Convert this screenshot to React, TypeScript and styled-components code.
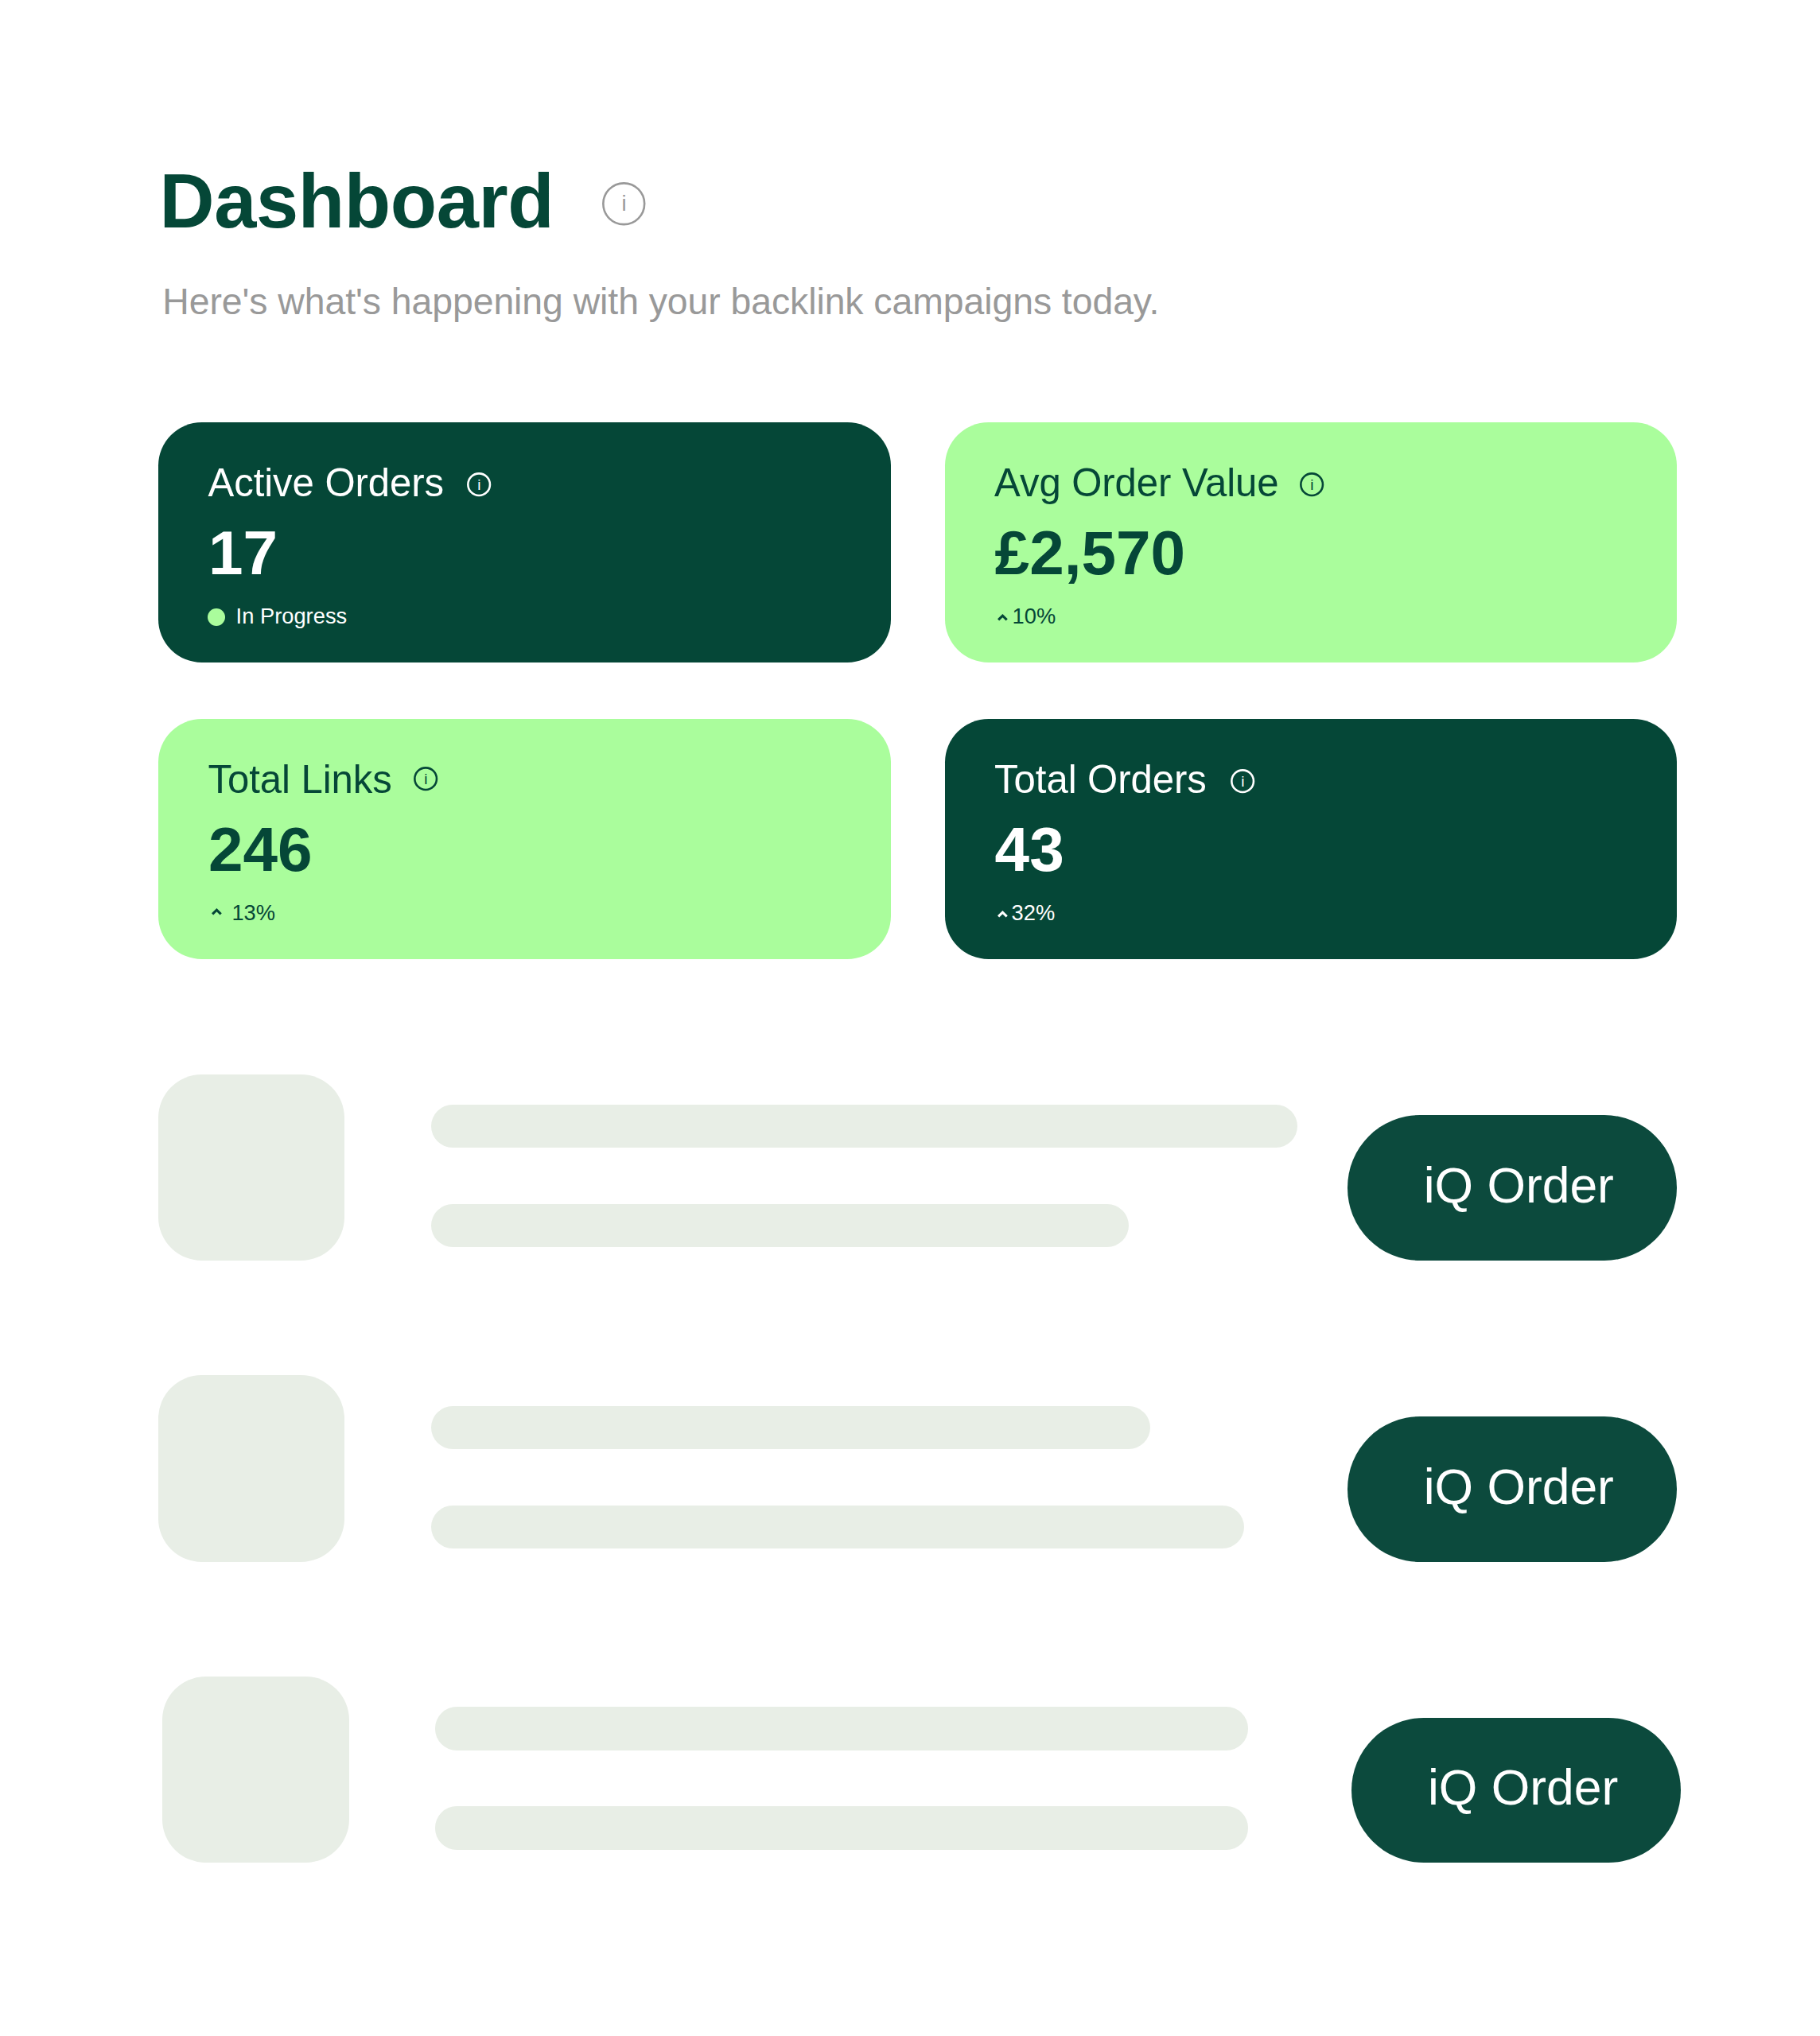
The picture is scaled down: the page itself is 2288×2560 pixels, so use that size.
import React from 'react';
import styled, { createGlobalStyle } from 'styled-components';

const DARK = '#054737';
const LIGHT = '#aafd9c';
const GREY = '#999999';
const PLACEHOLDER = '#e8eee6';
const BUTTON = '#0c4a3d';

const GlobalStyle = createGlobalStyle`
  *, *::before, *::after { box-sizing: border-box; }
  body {
    margin: 0;
    background: #ffffff;
    font-family: "Liberation Sans", Arial, Helvetica, sans-serif;
  }
`;

const Page = styled.main`
  width: 2288px;
  height: 2560px;
  overflow: hidden;
  padding: 197px 0 0 199px;
`;

const Header = styled.header`
  display: flex;
  flex-direction: column;
`;

const TitleRow = styled.div`
  display: flex;
  align-items: flex-start;
`;

const Title = styled.h1`
  margin: 0;
  padding-left: 1.5px;
  font-size: 95.6px;
  letter-spacing: -0.4px;
  line-height: 112px;
  font-weight: 700;
  color: ${DARK};
  white-space: nowrap;
  width: 558px;
`;

const Subtitle = styled.p`
  margin: 42px 0 0 5.3px;
  font-size: 46.4px;
  letter-spacing: -0.07px;
  line-height: 56px;
  color: ${GREY};
  white-space: nowrap;
`;

const InfoSvg = styled.svg<{ $size: number; $top: number; $left: number }>`
  display: block;
  flex: none;
  width: ${p => p.$size}px;
  height: ${p => p.$size}px;
  margin-top: ${p => p.$top}px;
  margin-left: ${p => p.$left}px;
  overflow: visible;
  font-family: inherit;
`;

const Grid = styled.section`
  display: grid;
  grid-template-columns: 920.6px 920.6px;
  grid-auto-rows: 302.3px;
  column-gap: 68px;
  row-gap: 70.7px;
  margin-top: 124px;
`;

const Card = styled.article<{ $dark: boolean }>`
  display: flex;
  flex-direction: column;
  padding: 47.7px 62.5px 0;
  border-radius: 54.6px;
  background: ${p => (p.$dark ? DARK : LIGHT)};
  color: ${p => (p.$dark ? '#ffffff' : DARK)};
`;

const LabelRow = styled.div`
  display: flex;
  align-items: flex-start;
  height: 56px;
`;

const Label = styled.span`
  font-size: 49.1px;
  letter-spacing: -0.06px;
  line-height: 56px;
  white-space: nowrap;
`;

const Value = styled.strong`
  margin: 20px 0 0 0.5px;
  font-size: 78.3px;
  line-height: 80px;
  font-weight: 700;
`;

const Foot = styled.div`
  display: flex;
  align-items: flex-start;
  height: 32px;
  margin-top: 24px;
  font-size: 27.3px;
  line-height: 32px;
`;

const Dot = styled.span`
  width: 22px;
  height: 22px;
  margin: 6.4px 13.5px 0 -0.4px;
  border-radius: 50%;
  background: ${LIGHT};
`;

const Caret = styled.svg<{ $left: number; $top: number; $gap: number }>`
  display: block;
  width: 13px;
  height: 9px;
  margin: ${p => p.$top}px ${p => p.$gap}px 0 ${p => p.$left}px;
`;

const List = styled.section`
  display: flex;
  flex-direction: column;
  gap: 144.4px;
  margin-top: 144.3px;
`;

const Row = styled.div<{ $indent: number }>`
  display: flex;
  width: 1909px;
  height: 234.3px;
  margin-left: ${p => p.$indent}px;
`;

const Thumb = styled.div`
  flex: none;
  width: 234.3px;
  height: 234.3px;
  border-radius: 54.6px;
  background: ${PLACEHOLDER};
`;

const Lines = styled.div`
  display: flex;
  flex-direction: column;
  flex: 1;
  gap: 70.8px;
  padding: 38.3px 0 0 108.7px;
`;

const Line = styled.div<{ $width: number }>`
  width: ${p => p.$width}px;
  height: 54.4px;
  border-radius: 27.3px;
  background: ${PLACEHOLDER};
`;

const OrderButton = styled.button`
  flex: none;
  align-self: flex-end;
  width: 414px;
  height: 182.4px;
  padding: 52.4px 0 0 95.7px;
  border: 0;
  border-radius: 91.2px;
  background: ${BUTTON};
  color: #ffffff;
  display: flex;
  align-items: flex-start;
  font-family: inherit;
  font-size: 62.4px;
  line-height: 72px;
  white-space: nowrap;
`;

interface InfoProps {
  size: number;
  fontSize: number;
  baseline: number;
  color?: string;
  top: number;
  left: number;
}

function Info({ size, fontSize, baseline, color = 'currentColor', top, left }: InfoProps) {
  const c = size / 2;
  return (
    <InfoSvg $size={size} $top={top} $left={left} viewBox={`0 0 ${size} ${size}`}>
      <circle cx={c} cy={c} r={c - 1.35} fill="none" stroke={color} strokeWidth="2.6" />
      <text x={c + 0.3} y={c + baseline} fontSize={fontSize} fill={color} textAnchor="middle">
        i
      </text>
    </InfoSvg>
  );
}

interface Stat {
  label: string;
  value: string;
  note: string;
  dark: boolean;
  infoTop: number;
  infoLeft: number;
  caret?: { left: number; top: number; gap: number };
}

const stats: Stat[] = [
  { label: 'Active Orders', value: '17', note: 'In Progress', dark: true, infoTop: 15.2, infoLeft: 29.3 },
  { label: 'Avg Order Value', value: '£2,570', note: '10%', dark: false, infoTop: 15.2, infoLeft: 26.8, caret: { left: 3.5, top: 12.9, gap: 6 } },
  { label: 'Total Links', value: '246', note: '13%', dark: false, infoTop: 12.3, infoLeft: 27, caret: { left: 4.6, top: 10.2, gap: 12.3 } },
  { label: 'Total Orders', value: '43', note: '32%', dark: true, infoTop: 15.3, infoLeft: 29.8, caret: { left: 3.5, top: 12.9, gap: 5 } },
];

const rows = [
  { lines: [1089.4, 877], indent: 0 },
  { lines: [904.3, 1021.6], indent: 0 },
  { lines: [1021.6, 1021.6], indent: 5.3 },
];

export default function App() {
  return (
    <>
      <GlobalStyle />
      <Page>
        <Header>
          <TitleRow>
            <Title>Dashboard</Title>
            <Info size={54.5} fontSize={27.3} baseline={8.4} color={GREY} top={31.6} left={0} />
          </TitleRow>
          <Subtitle>Here's what's happening with your backlink campaigns today.</Subtitle>
        </Header>
        <Grid>
          {stats.map(s => (
            <Card key={s.label} $dark={s.dark}>
              <LabelRow>
                <Label>{s.label}</Label>
                <Info size={30.3} fontSize={19.1} baseline={6.7} top={s.infoTop} left={s.infoLeft} />
              </LabelRow>
              <Value>{s.value}</Value>
              <Foot>
                {s.caret ? (
                  <Caret $left={s.caret.left} $top={s.caret.top} $gap={s.caret.gap} viewBox="0 0 13 9">
                    <path d="M1.1 7.4 L6.4 2.2 L11.7 7.4" fill="none" stroke="currentColor" strokeWidth="3.1" />
                  </Caret>
                ) : (
                  <Dot />
                )}
                <span>{s.note}</span>
              </Foot>
            </Card>
          ))}
        </Grid>
        <List>
          {rows.map((r, i) => (
            <Row key={i} $indent={r.indent}>
              <Thumb />
              <Lines>
                {r.lines.map((w, j) => (
                  <Line key={j} $width={w} />
                ))}
              </Lines>
              <OrderButton type="button">iQ Order</OrderButton>
            </Row>
          ))}
        </List>
      </Page>
    </>
  );
}
